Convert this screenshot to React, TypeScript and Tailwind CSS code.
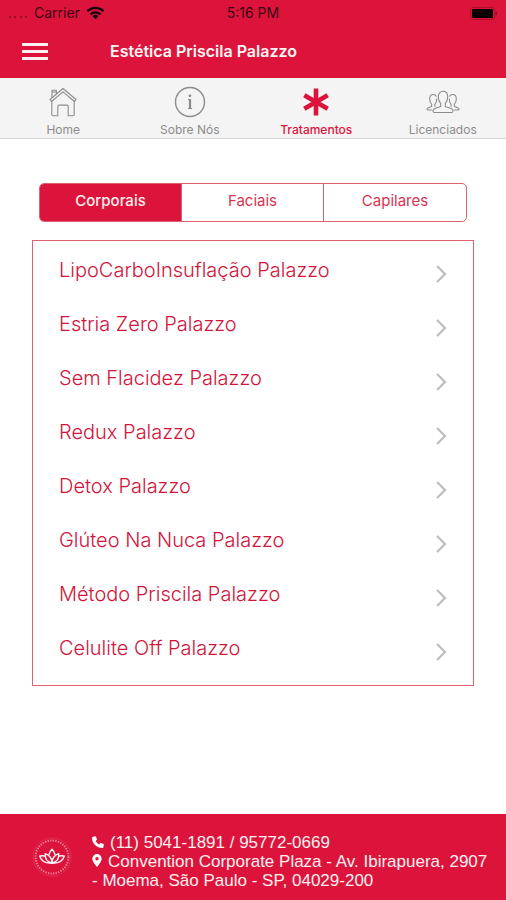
import type { ReactNode } from "react";

const treatments = [
  "LipoCarboInsuflação Palazzo",
  "Estria Zero Palazzo",
  "Sem Flacidez Palazzo",
  "Redux Palazzo",
  "Detox Palazzo",
  "Glúteo Na Nuca Palazzo",
  "Método Priscila Palazzo",
  "Celulite Off Palazzo",
];

function StatusBar() {
  return (
    <div className="grid h-6 grid-cols-3 items-center px-2 pt-0.5 text-sm leading-4 text-[#3b0410]">
      <div className="flex items-center">
        {/* Signal */}
        <svg width="22" height="12" viewBox="0 0 22 12" fill="#8e0b26" aria-hidden="true">
          <circle cx="2" cy="10" r="1" />
          <circle cx="7" cy="10" r="1" />
          <circle cx="13" cy="10" r="1" />
          <circle cx="18" cy="10" r="1" />
        </svg>
        <span className="ml-1">Carrier</span>
        {/* Wifi */}
        <svg className="ml-1.5" width="19" height="14" viewBox="0 0 20 14" fill="none" stroke="#12060a" strokeWidth="2.4" aria-hidden="true">
          <path d="M1.5 5.2C6.2 .4 13.8 .4 18.5 5.2" />
          <path d="M4.8 8.6c2.9-2.9 7.5-2.9 10.4 0" />
          <path d="M10 13.6 6.9 10.5a4.4 4.4 0 0 1 6.2 0z" fill="#12060a" stroke="none" />
        </svg>
      </div>
      <span className="text-center">5:16 PM</span>
      {/* Battery */}
      <svg className="justify-self-end" width="28" height="13" viewBox="0 0 28 13" aria-hidden="true">
        <rect x=".5" y=".5" width="24" height="12" rx="2.5" fill="none" stroke="#b00c2e" />
        <rect x="2" y="2" width="21" height="9" rx="1" fill="#0a0003" />
        <path d="M25.5 4.5c2 .6 2 3.400 0 4z" fill="#8e0b26" />
      </svg>
    </div>
  );
}

function HomeIcon() {
  return (
    <svg width="28" height="30" viewBox="0 0 28 30" fill="none" stroke="#8c8c8c" strokeWidth="1.1" strokeLinejoin="round" aria-hidden="true">
      <path d="M1 12.500 14 1.500l13 11-1.500 2L14 4.900 2.500 14.500z" />
      <path d="M3 10.800V3.200h4.400v3.900M3 5h4.400" />
      <path d="M2.800 14.300V27.500c0 .8.400 1.200 1.200 1.200h4.800V19.500c0-.9.500-1.400 1.400-1.400h7.600c.9 0 1.400.5 1.400 1.400v9.200H24c.8 0 1.200-.4 1.200-1.200V14.300" />
    </svg>
  );
}

function InfoIcon() {
  return (
    <svg width="32" height="32" viewBox="0 0 32 32" fill="none" stroke="#8c8c8c" strokeWidth="1.4" aria-hidden="true">
      <circle cx="16" cy="16" r="14.5" />
      <path d="M16 13V22.500" strokeWidth="2.200" />
      <path d="M14.200 13.500H16M14 22.500h4" strokeWidth="1" />
      <circle cx="16" cy="9.800" r="1.400" fill="#8c8c8c" stroke="none" />
    </svg>
  );
}

function AsteriskIcon() {
  return (
    <svg width="28" height="28" viewBox="0 0 28 28" stroke="#dc143c" strokeWidth="4.6" aria-hidden="true">
      <path d="M14 .5v27M2.300 7.200l23.400 13.600M25.700 7.200 2.300 20.800" />
    </svg>
  );
}

function PeopleIcon() {
  return (
    <svg width="34" height="24" viewBox="0 0 34 24" fill="none" stroke="#8c8c8c" strokeWidth="1.1" strokeLinejoin="round" aria-hidden="true">
      <path d="M14.700 13.300c-1.700-1.700-2.400-4-2.400-6.600 0-3.300 1.900-5.400 4.700-5.400s4.700 2.100 4.700 5.400c0 2.600-.7 4.900-2.400 6.600v3.200c1.800 1.100 6 1.400 7.300 3.100.8 1.100.5 2.900-.8 2.900H8.200c-1.300 0-1.600-1.800-.8-2.900 1.300-1.700 5.500-2 7.300-3.100z" />
      <path d="M10.500 6.500C9.800 5.100 8.700 4.500 7.300 4.500 5 4.500 3.700 6.300 3.700 9c0 2.200.6 3.900 2 5.300v2C4.200 17.300 2 17.300 1.200 18.600c-.4.700-.1 1.400.6 1.400h4M10.700 8.500c.1 2.500-.5 4.400-1.800 5.800v2.500" />
      <path d="M23.500 6.500c.7-1.400 1.800-2 3.200-2 2.300 0 3.600 1.800 3.600 4.500 0 2.200-.6 3.900-2 5.300v2c1.500 1 3.700 1 4.500 2.300.4.700.1 1.400-.6 1.400h-4M23.300 8.500c-.1 2.500.5 4.400 1.800 5.800v2.500" />
    </svg>
  );
}

function LotusLogo() {
  return (
    <svg className="shrink-0" width="40" height="40" viewBox="0 0 40 40" fill="none" aria-hidden="true">
      <circle cx="20" cy="20" r="19" stroke="#e23f5e" strokeWidth=".6" />
      <circle cx="20" cy="20" r="16.5" stroke="#ee8296" strokeWidth="2" strokeDasharray="1.3 1.3" />
      <g stroke="#fff" strokeWidth="1.3" strokeLinejoin="round" strokeLinecap="round">
        <path d="M17 17.500c.5-2 1.500-3.700 3-5.200 1.500 1.500 2.500 3.200 3 5.200" />
        <path d="M20 26c-5-1-7-4.500-6.800-9.300C17 18 19.800 21 20 26zM20 26c5-1 7-4.500 6.800-9.300C23 18 20.200 21 20 26z" />
        <path d="M13.200 19.200c-1.800-.6-3.800-.6-5.500 0C9.500 24 14 26.600 20 26c6 .6 10.500-2 12.300-6.800-1.700-.6-3.700-.6-5.500 0" />
      </g>
    </svg>
  );
}

function Tab({ icon, label, active = false }: { icon: ReactNode; label: string; active?: boolean }) {
  return (
    <a
      href="#"
      aria-current={active ? "page" : undefined}
      className={
        active
          ? "flex flex-col items-center text-xs font-medium text-[#dc143c]"
          : "flex flex-col items-center text-xs text-[#8c8c8c]"
      }
    >
      <span className="flex h-11 items-center justify-center pt-1">{icon}</span>
      <span className="leading-4">{label}</span>
    </a>
  );
}

export default function App() {
  return (
    <div className="flex min-h-screen flex-col bg-white font-['Inter',sans-serif]">
      <header className="bg-[#dc143c]">
        <StatusBar />
        <div className="flex h-[54px] items-center px-5">
          <button type="button" aria-label="Menu" className="p-0.5 pt-1">
            <svg width="26" height="18" viewBox="0 0 26 18" fill="#fff0f0" aria-hidden="true">
              <rect y="0" width="26" height="3" />
              <rect y="7" width="26" height="3" />
              <rect y="14" width="26" height="3" />
            </svg>
          </button>
          <h1 className="ml-15 text-base font-semibold text-[#fff5f5]">Estética Priscila Palazzo</h1>
        </div>
      </header>

      <nav className="grid h-[61px] grid-cols-4 border-b border-[#d6d6d6] bg-[#f4f4f4]">
        <Tab icon={<HomeIcon />} label="Home" />
        <Tab icon={<InfoIcon />} label="Sobre Nós" />
        <Tab icon={<AsteriskIcon />} label="Tratamentos" active />
        <Tab icon={<PeopleIcon />} label="Licenciados" />
      </nav>

      <main className="flex-1 px-8 pt-11">
        <div className="mx-[7px] grid h-[39px] grid-cols-3 divide-x divide-[#dd6272] overflow-hidden rounded-[5px] border border-[#dd6272] text-[15px]">
          <button type="button" className="bg-[#dc143c] pb-0.5 font-medium text-[#fff0f0]">Corporais</button>
          <button type="button" className="pb-0.5 text-[#d93550]">Faciais</button>
          <button type="button" className="pb-0.5 text-[#d93550]">Capilares</button>
        </div>

        <ul className="mt-[18px] border border-[#dd6272] pt-1 pr-5 pb-2 pl-[26px]">
          {treatments.map((name) => (
            <li key={name}>
              <a href="#" className="flex h-[54px] items-center justify-between text-xl font-light text-[#d2143a]">
                <span className="pb-1">{name}</span>
                <svg className="mt-1" width="24" height="20" viewBox="0 0 24 20" fill="none" stroke="#bdbdbd" strokeWidth="2.2" aria-hidden="true">
                  <path d="m8 2 8 8-8 8" />
                </svg>
              </a>
            </li>
          ))}
        </ul>
      </main>

      <footer className="flex h-[86px] items-center gap-5 bg-[#dc143c] pr-4 pl-8 font-['Liberation_Sans',Arial,sans-serif] text-[17px] leading-[19px] text-[#fff0f0]">
        <LotusLogo />
        <div className="min-w-0 flex-1 pt-2">
          <p>
            <svg className="mr-1.5 inline-block align-baseline" width="12" height="12" viewBox="0 0 12 12" fill="#fff" aria-hidden="true">
              <path d="M.6 1 3 .3c.4-.1.7.1.9.4l1 2.300c.1.400 0 .700-.200.900L3.600 5a8.500 8.500 0 0 0 3.600 3.500l1.100-1.200c.2-.3.600-.3.900-.2l2.200.9c.400.200.600.500.500.900l-.6 2.500c-.1.400-.4.600-.8.600C4.700 12 0 7.300 0 1.800c0-.4.200-.7.600-.8z" />
            </svg>
            (11) 5041-1891 / 95772-0669
          </p>
          <p>
            <svg className="mr-1.5 inline-block align-baseline" width="10" height="13" viewBox="0 0 10 13" fill="#fff" aria-hidden="true">
              <path fillRule="evenodd" d="M5 0a4.700 4.700 0 0 0-4.700 4.700C.3 7.200 2 9 5 13c3-4 4.700-5.800 4.700-8.300A4.700 4.700 0 0 0 5 0zm0 3a1.700 1.700 0 1 1 0 3.400A1.700 1.700 0 0 1 5 3z" />
            </svg>
            Convention Corporate Plaza - Av. Ibirapuera, 2907
            <br />- Moema, São Paulo - SP, 04029-200
          </p>
        </div>
      </footer>
    </div>
  );
}
